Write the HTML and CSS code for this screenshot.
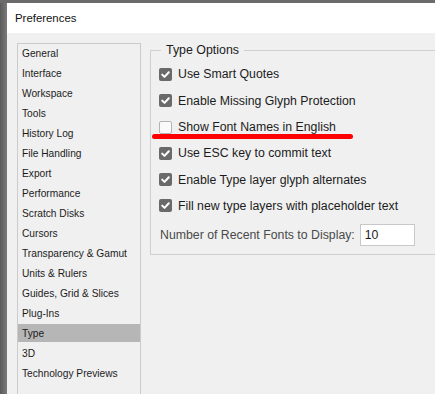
FILE: index.html
```html
<!DOCTYPE html>
<html>
<head>
<meta charset="utf-8">
<link rel="stylesheet" href="styles.css">
</head>
<body>
<div class="frame-top"></div>
<div class="frame-row">
  <div class="frame-left"></div>
  <div class="window">
    <div class="titlebar">Preferences</div>
    <div class="content">
      <ul class="sidebar">
        <li>General</li>
        <li>Interface</li>
        <li>Workspace</li>
        <li>Tools</li>
        <li>History Log</li>
        <li>File Handling</li>
        <li>Export</li>
        <li>Performance</li>
        <li>Scratch Disks</li>
        <li>Cursors</li>
        <li>Transparency &amp; Gamut</li>
        <li>Units &amp; Rulers</li>
        <li>Guides, Grid &amp; Slices</li>
        <li>Plug-Ins</li>
        <li class="selected">Type</li>
        <li>3D</li>
        <li>Technology Previews</li>
      </ul>
      <div class="panel">
        <fieldset class="group">
          <legend>Type Options</legend>
          <div class="group-body">
            <div class="opt"><span class="cb on"><svg viewBox="0 0 13 13" width="13" height="13"><path d="M3.2 6.6 L5.5 8.9 L9.8 4.3" fill="none" stroke="#fff" stroke-width="2" stroke-linecap="round" stroke-linejoin="round"/></svg></span>Use Smart Quotes</div>
            <div class="opt"><span class="cb on"><svg viewBox="0 0 13 13" width="13" height="13"><path d="M3.2 6.6 L5.5 8.9 L9.8 4.3" fill="none" stroke="#fff" stroke-width="2" stroke-linecap="round" stroke-linejoin="round"/></svg></span>Enable Missing Glyph Protection</div>
            <div class="opt"><span class="cb"></span>Show Font Names in English</div>
            <div class="opt"><span class="cb on"><svg viewBox="0 0 13 13" width="13" height="13"><path d="M3.2 6.6 L5.5 8.9 L9.8 4.3" fill="none" stroke="#fff" stroke-width="2" stroke-linecap="round" stroke-linejoin="round"/></svg></span>Use ESC key to commit text</div>
            <div class="opt"><span class="cb on"><svg viewBox="0 0 13 13" width="13" height="13"><path d="M3.2 6.6 L5.5 8.9 L9.8 4.3" fill="none" stroke="#fff" stroke-width="2" stroke-linecap="round" stroke-linejoin="round"/></svg></span>Enable Type layer glyph alternates</div>
            <div class="opt"><span class="cb on"><svg viewBox="0 0 13 13" width="13" height="13"><path d="M3.2 6.6 L5.5 8.9 L9.8 4.3" fill="none" stroke="#fff" stroke-width="2" stroke-linecap="round" stroke-linejoin="round"/></svg></span>Fill new type layers with placeholder text</div>
            <div class="recent"><span class="recent-label">Number of Recent Fonts to Display:</span><span class="num">10</span></div>
          </div>
        </fieldset>
        <div class="annotation"></div>
      </div>
    </div>
  </div>
</div>
</body>
</html>
```
FILE: styles.css
```css
html, body {
  margin: 0;
  padding: 0;
  width: 435px;
  height: 394px;
  overflow: hidden;
  background: #f0f0f0;
  font-family: "Liberation Sans", Arial, sans-serif;
}
.frame-top {
  height: 3px;
  background: #6b6b6b;
}
.frame-row {
  display: flex;
  height: 391px;
}
.frame-left {
  width: 7px;
  flex: none;
  background: linear-gradient(to right, #5a5a5a, #7a7a7a);
}
.window {
  flex: 1;
  display: flex;
  flex-direction: column;
  min-width: 0;
}
.titlebar {
  height: 30px;
  background: #ffffff;
  padding-left: 8px;
  font-size: 11.4px;
  line-height: 30px;
  color: #111;
}
.content {
  flex: 1;
  display: flex;
  padding-top: 10px;
  background: #f0f0f0;
}
.sidebar {
  list-style: none;
  margin: 0 0 0 10px;
  padding: 0;
  width: 122px;
  flex: none;
  border: 1px solid #cbcbcb;
  border-bottom: none;
  box-sizing: content-box;
}
.sidebar li {
  height: 18px;
  margin-bottom: 2px;
  padding-left: 4px;
  padding-top: 1px;
  box-sizing: border-box;
  font-size: 10.2px;
  line-height: 18px;
  color: #1c1c1c;
  white-space: nowrap;
}
.sidebar li.selected {
  background: #b6b6b6;
}
.panel {
  position: relative;
  flex: 1;
  margin-left: 9px;
}
.group {
  margin: 0;
  padding: 0;
  border: 1px solid #cfcfcf;
  border-right: none;
  min-width: 0;
}
.group legend {
  margin-left: 10px;
  padding: 0 5px;
  font-size: 12.4px;
  line-height: 14px;
  color: #1c1c1c;
}
.group-body {
  padding: 4.3px 0 8.5px 8px;
}
.opt {
  height: 26.3px;
  display: flex;
  align-items: center;
  font-size: 12.3px;
  color: #1c1c1c;
  white-space: nowrap;
}
.cb {
  width: 13px;
  height: 13px;
  box-sizing: border-box;
  border-radius: 2px;
  margin-right: 6px;
  flex: none;
  border: 1px solid #b4b4b4;
  background: #fafafa;
}
.cb.on {
  border: none;
  background: #6a6a6a;
}
.cb svg {
  display: block;
}
.recent {
  margin-top: 4.8px;
  display: flex;
  align-items: center;
  height: 22px;
  padding-left: 1px;
  font-size: 12.3px;
  color: #4a4a4a;
  white-space: nowrap;
}
.num {
  margin-left: 5px;
  width: 55px;
  height: 22px;
  box-sizing: border-box;
  border: 1px solid #c8c8c8;
  background: #fff;
  padding-left: 4px;
  line-height: 20px;
  color: #1c1c1c;
}
.annotation {
  position: absolute;
  left: 2px;
  top: 91px;
  width: 201px;
  height: 5px;
  border-radius: 2.5px;
  background: #ff0000;
}
```
